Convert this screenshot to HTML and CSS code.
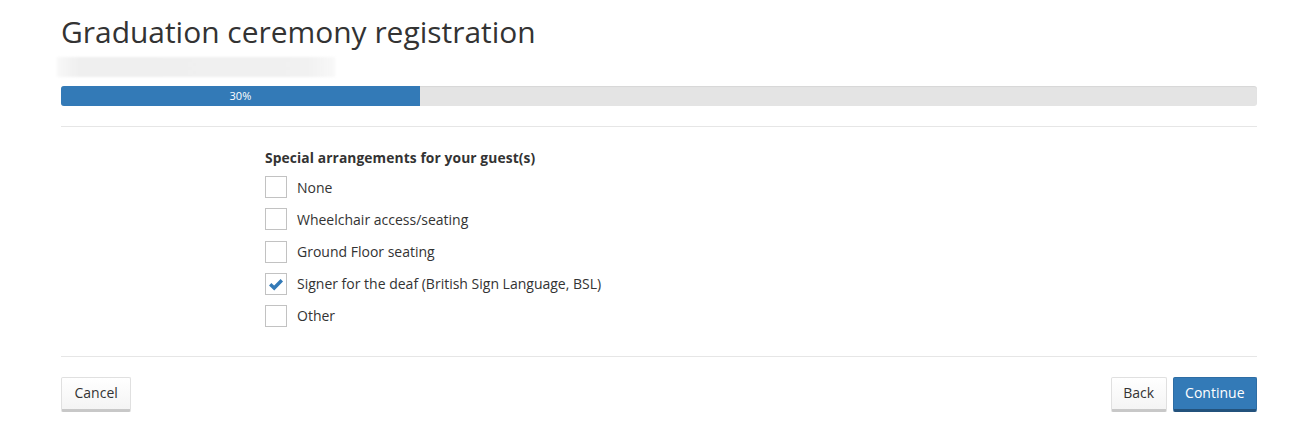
FILE: index.html
```html
<!DOCTYPE html>
<html lang="en">
<head>
<meta charset="utf-8">
<title>Graduation ceremony registration</title>
<link rel="stylesheet" href="styles.css">
</head>
<body>
<div class="page">
  <h1 class="title">Graduation ceremony registration</h1>
  <div class="subtitle"></div>
  <div class="progress"><div class="progress-fill" style="width:30%">30%</div></div>
  <hr class="rule rule-top">
  <fieldset class="group">
    <legend class="group-label">Special arrangements for your guest(s)</legend>
    <label class="option"><span class="box"></span><span class="text">None</span></label>
    <label class="option"><span class="box"></span><span class="text">Wheelchair access/seating</span></label>
    <label class="option"><span class="box"></span><span class="text">Ground Floor seating</span></label>
    <label class="option"><span class="box checked"><svg viewBox="0 0 22 22" width="22" height="22"><path d="M5.2 11.2 L9.2 15 L16.8 7.2" fill="none" stroke="#337ab7" stroke-width="3.4" stroke-linecap="butt" stroke-linejoin="miter"/></svg></span><span class="text">Signer for the deaf (British Sign Language, BSL)</span></label>
    <label class="option"><span class="box"></span><span class="text">Other</span></label>
  </fieldset>
  <hr class="rule rule-bottom">
  <div class="actions">
    <button class="btn btn-cancel">Cancel</button>
    <div class="actions-right">
      <button class="btn btn-back">Back</button>
      <button class="btn btn-primary">Continue</button>
    </div>
  </div>
</div>
</body>
</html>
```
FILE: styles.css
```css
html, body {
  margin: 0;
  padding: 0;
  background: #fff;
}
body {
  font-family: "Open Sans", "Liberation Sans", sans-serif;
  color: #333;
}
.page {
  width: 1196px;
  margin-left: 61px;
  padding-top: 12px;
}
.title {
  font-size: 29.95px;
  font-weight: 400;
  line-height: 40px;
  margin: 0;
  color: #333;
}
.subtitle {
  width: 278px;
  height: 20px;
  margin: 5px 0 0 -4px;
  background: linear-gradient(90deg, rgba(238,238,238,0.4) 0%, #efefef 8%, #f0f0f0 60%, #f1f1f1 90%, rgba(242,242,242,0.5) 100%);
  filter: blur(1px);
}
.progress {
  height: 20px;
  margin-top: 9px;
  background: #e4e4e4;
  border-radius: 3px;
  overflow: hidden;
  box-shadow: inset 0 1px 1px rgba(0,0,0,0.06);
}
.progress-fill {
  height: 20px;
  background: #337ab7;
  color: #fff;
  font-size: 11px;
  line-height: 20px;
  text-align: center;
}
.rule {
  border: 0;
  border-top: 1px solid #e6e6e6;
  margin: 0;
}
.rule-top {
  margin-top: 20px;
}
.group {
  border: 0;
  margin: 0;
  padding: 21px 0 29px 204px;
  display: flex;
  flex-direction: column;
  gap: 10.2px;
}
.group-label {
  padding: 0;
  font-size: 13.8px;
  font-weight: 700;
  line-height: 19px;
  float: left;
  margin-bottom: -1px;
  color: #333;
  letter-spacing: 0.1px;
}
.option {
  display: flex;
  align-items: center;
  gap: 10px;
  height: 22px;
  font-size: 14px;
  color: #333;
}
.box {
  width: 20px;
  height: 20px;
  border: 1px solid #c2c2c2;
  background: #fff;
  flex: none;
  position: relative;
}
.box svg {
  position: absolute;
  left: -1px;
  top: -1px;
}
.actions {
  display: flex;
  justify-content: space-between;
  margin-top: 20px;
}
.actions-right {
  display: flex;
  gap: 6px;
}
.btn {
  font-family: "Open Sans", "Liberation Sans", sans-serif;
  font-size: 14px;
  height: 35px;
  padding: 0 12px 2px;
  line-height: 30px;
  border: 1px solid #e0e0e0;
  border-bottom: 3px solid #c8c8c8;
  border-radius: 2px;
  background: linear-gradient(#fff, #f4f4f4);
  color: #333;
}
.btn-cancel {
  padding: 0 12.5px 2px;
}
.btn-back {
  padding: 0 11.5px 2px;
}
.btn-primary {
  background: #337ab7;
  border-color: #2e6da4;
  border-bottom-color: #23527c;
  color: #fff;
  padding: 0 11.5px 2px;
}
```
